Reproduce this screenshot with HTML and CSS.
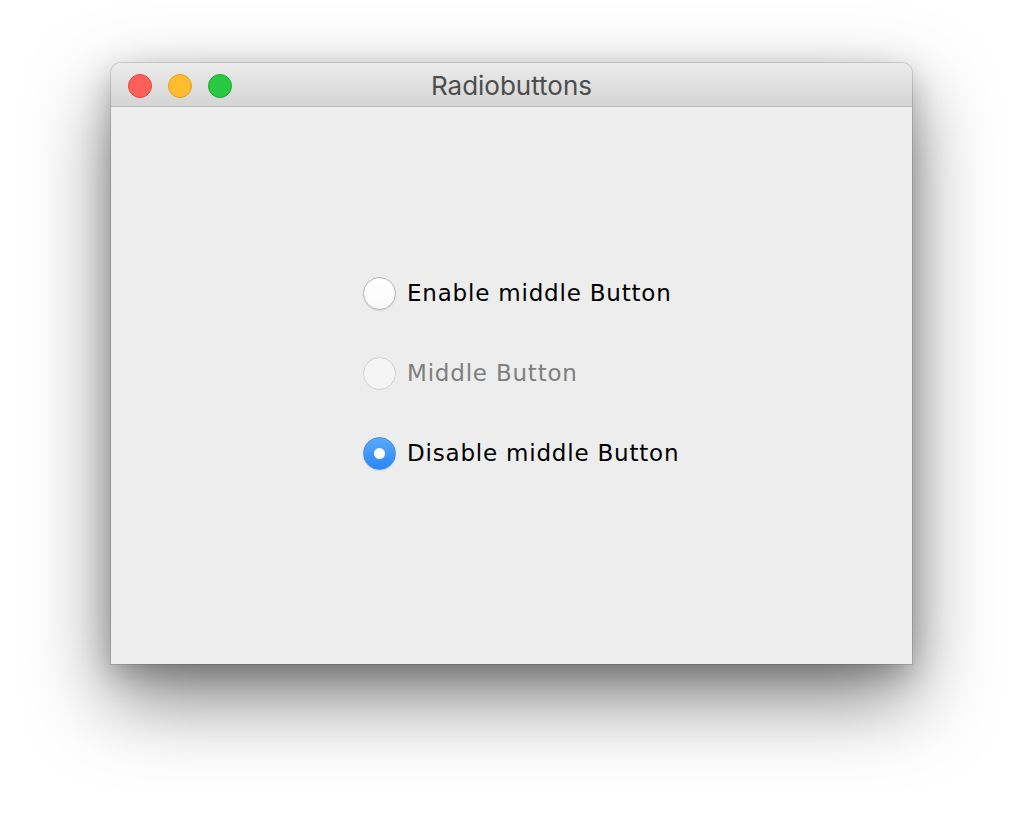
FILE: index.html
```html
<!DOCTYPE html>
<html>
<head>
<meta charset="utf-8">
<link rel="stylesheet" href="styles.css">
</head>
<body>
<div class="window">
  <div class="titlebar">
    <div class="lights">
      <span class="light red"></span>
      <span class="light yellow"></span>
      <span class="light green"></span>
    </div>
    <div class="title">Radiobuttons</div>
  </div>
  <div class="content">
    <div class="group">
      <label class="radio"><span class="dot"></span><span class="label">Enable middle Button</span></label>
      <label class="radio disabled"><span class="dot"></span><span class="label">Middle Button</span></label>
      <label class="radio checked"><span class="dot"></span><span class="label">Disable middle Button</span></label>
    </div>
  </div>
</div>
</body>
</html>
```

FILE: styles.css
```css
html, body {
  margin: 0;
  padding: 0;
  background: #ffffff;
}
body {
  width: 1024px;
  height: 824px;
  overflow: hidden;
  padding: 63px 0 0 111px;
  box-sizing: border-box;
}
.window {
  width: 801px;
  height: 601px;
  border-radius: 10px 10px 0 0;
  background: #ededed;
  box-shadow: 0 0 0 1px rgba(0,0,0,0.12), 0 34px 80px rgba(0,0,0,0.5), 0 10px 30px rgba(0,0,0,0.22);
  display: flex;
  flex-direction: column;
  overflow: hidden;
}
.titlebar {
  height: 43px;
  flex: none;
  background: linear-gradient(#ebebeb, #d5d5d5);
  border-bottom: 1px solid #b9b9b9;
  position: relative;
  display: flex;
  align-items: center;
}
.lights {
  display: flex;
  gap: 16px;
  padding-left: 17px;
  padding-top: 2px;
}
.light {
  width: 24px;
  height: 24px;
  border-radius: 50%;
  box-sizing: border-box;
}
.red { background: #fe5f57; border: 1px solid #e2463f; }
.yellow { background: #febc2e; border: 1px solid #e1a116; }
.green { background: #28c840; border: 1px solid #14ae2a; }
.title {
  position: absolute;
  left: 0;
  right: 0;
  top: 2px;
  bottom: 0;
  display: flex;
  align-items: center;
  justify-content: center;
  font-family: "Inter", "Open Sans", sans-serif;
  font-size: 26px;
  color: #4d4d4d;
}
.content {
  flex: 1;
  display: flex;
  justify-content: flex-start;
  padding-left: 252px;
  padding-top: 169px;
}
.group {
  display: flex;
  flex-direction: column;
  gap: 46px;
}
.radio {
  display: flex;
  align-items: center;
  gap: 11px;
  height: 34px;
  font-family: "DejaVu Sans", sans-serif;
  font-size: 23px;
  letter-spacing: 0.8px;
  color: #000;
}
.dot {
  width: 33px;
  height: 33px;
  border-radius: 50%;
  box-sizing: border-box;
  background: linear-gradient(#ffffff, #fafafa);
  border: 1px solid #b3b3b3;
  box-shadow: 0 1px 1px rgba(0,0,0,0.08);
  flex: none;
  display: flex;
  align-items: center;
  justify-content: center;
}
.disabled .dot {
  background: #f5f5f5;
  border-color: #d2d2d2;
  box-shadow: none;
}
.disabled .label { color: #7f7f7f; }
.checked .dot {
  background: linear-gradient(#5aa9fb, #2b87f6);
  border: 1px solid #3a8ef0;
}
.checked .dot::after {
  content: "";
  width: 11px;
  height: 11px;
  border-radius: 50%;
  background: #fff;
}
```
